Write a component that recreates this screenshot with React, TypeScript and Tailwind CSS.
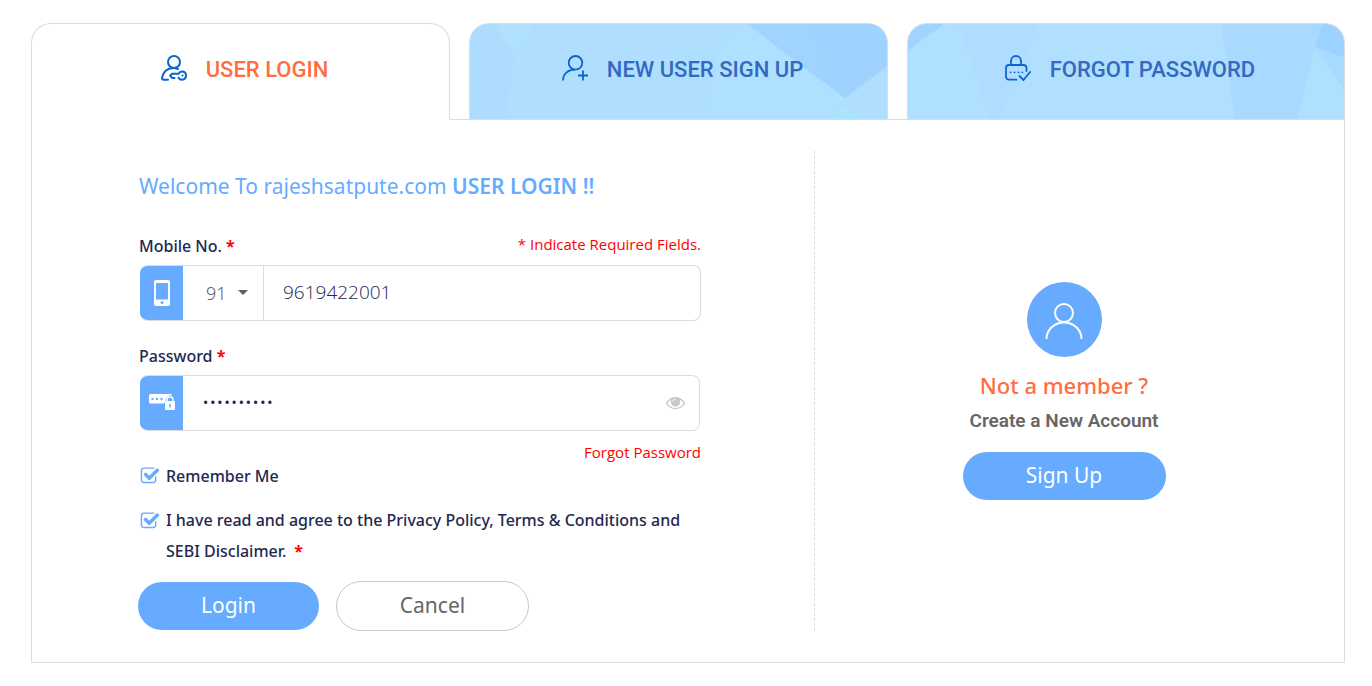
import { useState } from "react";
import type { ReactNode } from "react";

const bodyFont = "font-['Noto_Sans','Open_Sans',sans-serif]";
const noteFont = "font-['Open_Sans','Noto_Sans',sans-serif]";
const titleFont = "font-['Roboto','Noto_Sans',sans-serif]";

function UserKeyIcon() {
  return (
    <svg className="mb-1" width="26" height="26" viewBox="0 0 26 26" fill="none" stroke="#0a66cc" strokeWidth="2" strokeLinecap="round">
      <circle cx="13" cy="7" r="6" />
      <path d="M7 24.700H2.600C1.300 24.700.8 24 1 22.800 1.800 17.200 6.300 13 12 13c2 0 3.600.4 5 1.100" />
      <path d="M13.500 22.900h-2.300l-2-2.100 1.800-2h6.500c.9-1.600 1.900-2.300 3.400-2.300 2.500 0 4.100 1.600 4.100 4.100s-1.600 4.100-4.100 4.100c-1.500 0-2.500-.6-3.400-1.800" />
      <path d="M21.500 20.600h.1" />
    </svg>
  );
}

function UserPlusIcon() {
  return (
    <svg className="mb-1" width="26" height="26" viewBox="0 0 26 26" fill="none" stroke="#0a66cc" strokeWidth="1.800">
      <circle cx="13.500" cy="7.800" r="6.800" />
      <path d="M1 25.500C1 19 6 14.600 12.500 14.600M21 15.500v10M16 20.500h10" />
    </svg>
  );
}

function LockCheckIcon() {
  return (
    <svg className="mb-1" width="26" height="26" viewBox="0 0 26 26" fill="none" stroke="#0a66cc" strokeWidth="1.800" strokeLinecap="round" strokeLinejoin="round">
      <path d="M6 10V6a5 5 0 0 1 10 0v4" />
      <path d="M11.500 24.700H4a3 3 0 0 1-3-3V13a3 3 0 0 1 3-3h14.500a3 3 0 0 1 3 3v3" />
      <path d="M14.500 21l4 4 6.600-8" />
      <path d="M5.500 17.300h.1M9.500 17.300h.1M13.500 17.300h.1M17.300 17.300h.1" />
    </svg>
  );
}

function SignUpBackdrop() {
  return (
    <svg className="absolute inset-0 -z-10 size-full" viewBox="0 0 418 96" preserveAspectRatio="none">
      <rect width="418" height="96" fill="#b0deff" />
      <path d="M0 0h25l20 35L35 96H0z" fill="#aedcff" />
      <path d="M25 0h40L45 28z" fill="#b0e1ff" />
      <path d="M250 20L278 0l98 75-18 21H235z" fill="#b0e0ff" />
      <path d="M278 0h140v43l-42 32z" fill="#9fd2ff" />
      <path d="M278 0h65l15 61z" fill="#a1d3ff" />
      <path d="M361 96l15-14 16 14z" fill="#a9e6fc" />
    </svg>
  );
}

function ForgotBackdrop() {
  return (
    <svg className="absolute inset-0 -z-10 size-full" viewBox="0 0 437 96" preserveAspectRatio="none">
      <rect width="437" height="96" fill="#b0dfff" />
      <path d="M0 27L36 0h15l31 96H0z" fill="#afe0ff" />
      <path d="M0 0h36L0 27z" fill="#a1d3ff" />
      <path d="M51 0h80L90 96h-8z" fill="#b0ddff" />
      <path d="M314 0h101l-7 23-17 73h-63z" fill="#a9d9ff" />
      <path d="M415 0h22v34l-29-11z" fill="#9dd1ff" />
      <path d="M408 23l29 11v33z" fill="#a8dbff" />
      <path d="M408 23l29 44v29h-46z" fill="#afe1ff" />
    </svg>
  );
}

function PhoneIcon() {
  return (
    <svg width="16" height="26" viewBox="0 0 16 26">
      <path fillRule="evenodd" fill="#fff" d="M2 0h12a2 2 0 0 1 2 2v22a2 2 0 0 1-2 2H2a2 2 0 0 1-2-2V2a2 2 0 0 1 2-2zM2 3v16.500h12V3zM8 21a1.500 1.500 0 1 0 0 3 1.500 1.500 0 0 0 0-3z" />
    </svg>
  );
}

function PasswordIcon() {
  return (
    <svg width="26" height="16" viewBox="0 0 26 16">
      <path fill="#fff" d="M1.500 0h20A1.500 1.500 0 0 1 23 1.300c-4 0-6 2-6.500 5.500l-1.500 2.700H1.500A1.500 1.500 0 0 1 0 8V1.500A1.500 1.500 0 0 1 1.500 0z" />
      <g fill="#66abff">
        <circle cx="3.500" cy="5" r="1.200" />
        <circle cx="8" cy="5" r="1.200" />
        <circle cx="12.500" cy="5" r="1.200" />
      </g>
      <path d="M18 8V5.800a3 3 0 0 1 6 0V8" fill="none" stroke="#fff" strokeWidth="1.500" />
      <rect x="16" y="7" width="10" height="9" rx="1" fill="#fff" />
      <path d="M21 10v3.500" stroke="#66abff" strokeWidth="1.500" />
    </svg>
  );
}

function EyeIcon() {
  return (
    <svg width="19" height="19" viewBox="0 0 1792 1792" fill="#c8c8c8">
      <path d="M1664 960q-152-236-381-353 61 104 61 225 0 185-131.500 316.500t-316.500 131.500-316.500-131.500-131.500-316.500q0-121 61-225-229 117-381 353 133 205 333.500 326.500t434.500 121.500 434.500-121.500 333.500-326.500zm-720-384q0-20-14-34t-34-14q-125 0-214.500 89.500t-89.500 214.500q0 20 14 34t34 14 34-14 14-34q0-86 61-147t147-61q20 0 34-14t14-34zm848 384q0 34-20 69-140 230-376.500 368.500t-499.500 138.500-499.500-139-376.500-368q-20-35-20-69t20-69q140-229 376.500-368t499.500-139 499.500 139 376.500 368q20 35 20 69z" />
      <path d="M896 460a400 400 0 1 0 .1 0zm0 68a48 48 0 0 1 0 96 208 208 0 0 0-208 208 48 48 0 0 1-96 0 304 304 0 0 1 304-304z" fillRule="evenodd" />
    </svg>
  );
}

function CheckBox({ id }: { id: string }) {
  return (
    <span className="relative flex size-5 shrink-0">
      <input id={id} type="checkbox" defaultChecked className="peer size-5 appearance-none" />
      <svg viewBox="0 0 1792 1792" fill="#66abff" className="pointer-events-none absolute inset-0 size-5 peer-checked:[&_.tick]:visible">
        <path d="M1472 930v318q0 119-84.500 203.500t-203.500 84.500h-832q-119 0-203.500-84.500t-84.500-203.500v-832q0-119 84.500-203.500t203.500-84.500h832q63 0 117 25 15 7 18 23 3 17-9 29l-49 49q-10 10-23 10-3 0-9-2-23-6-45-6h-832q-66 0-113 47t-47 113v832q0 66 47 113t113 47h832q66 0 113-47t47-113v-254q0-13 9-22l64-64q10-10 23-10 6 0 12 3 20 8 20 29z" />
        <path className="tick invisible" d="M1703 441l-814 814q-24 24-57 24t-57-24l-430-430q-24-24-24-57t24-57l110-110q24-24 57-24t57 24l263 263 647-647q24-24 57-24t57 24l110 110q24 24 24 57t-24 57z" />
      </svg>
    </span>
  );
}

function Tab({ icon, backdrop, children }: { icon: ReactNode; backdrop: ReactNode; children: ReactNode }) {
  return (
    <button
      type="button"
      className={`relative isolate flex h-24 items-center justify-center gap-[19px] overflow-hidden rounded-t-[20px] border border-b-0 border-[#d9dde0] pb-1 pl-2 text-[22px] font-medium text-[#3369c0] ${titleFont}`}
    >
      {backdrop}
      {icon}
      {children}
    </button>
  );
}

const Required = () => <span className="font-bold text-[#ff0000]">*</span>;

export default function App() {
  const [showPassword, setShowPassword] = useState(false);

  return (
    <main className={`bg-white py-[23px] pr-[27px] pl-[31px] text-[#232850] ${bodyFont}`}>
      <div className="grid grid-cols-[419fr_419fr_438fr] gap-[19px]">
        <button
          type="button"
          className={`relative z-10 -mb-px flex h-[97px] items-center justify-center gap-[19px] rounded-t-[20px] border border-b-0 border-[#dcdcdc] bg-white pb-[5px] pl-2 text-[22px] font-medium text-[#ff6e40] ${titleFont}`}
        >
          <UserKeyIcon />
          USER LOGIN
        </button>
        <Tab icon={<UserPlusIcon />} backdrop={<SignUpBackdrop />}>
          NEW USER SIGN UP
        </Tab>
        <Tab icon={<LockCheckIcon />} backdrop={<ForgotBackdrop />}>
          FORGOT PASSWORD
        </Tab>
      </div>

      <div className="grid grid-cols-[752fr_498fr] border border-[#dcdcdc] p-[31px]">
        <form className="border-r border-dashed border-[#dcdcdc] pt-5 pr-[113px] pl-[76px]">
          <h1 className="text-[21px] leading-[30px] text-[#66abff]">
            Welcome To rajeshsatpute.com <b className="font-semibold">USER LOGIN !!</b>
          </h1>

          <div className="mt-[31px] flex h-7 justify-between">
            <label htmlFor="mobile" className="text-base leading-7 font-medium">
              Mobile No. <Required />
            </label>
            <span className={`text-[15px] leading-6 text-[#ff0000] ${noteFont}`}>* Indicate Required Fields.</span>
          </div>
          <div className="mt-[5px] ml-px flex h-14 overflow-hidden rounded-lg border border-l-0 border-[#dcdcdc]">
            <span className="-my-px flex w-[43px] shrink-0 items-center justify-center bg-[#66abff]">
              <PhoneIcon />
            </span>
            <span className="relative flex w-[81px] shrink-0 border-r border-[#dcdcdc]">
              <select aria-label="Country code" className="w-full appearance-none pl-[23px] text-lg font-light text-[#5f5f5f]">
                <option>91</option>
              </select>
              <svg width="10" height="5" viewBox="0 0 10 5" className="pointer-events-none absolute top-6 right-[15px]">
                <path d="M0 0h10L5 5z" fill="#5f5f5f" />
              </svg>
            </span>
            <input
              id="mobile"
              type="text"
              defaultValue="9619422001"
              className={`min-w-0 flex-1 px-[19px] pb-[2px] text-[19px] font-light ${noteFont}`}
            />
          </div>

          <label htmlFor="password" className="mt-[21px] block text-base leading-7 font-medium">
            Password <Required />
          </label>
          <div className="mt-[5px] mr-px ml-px flex h-14 overflow-hidden rounded-lg border border-l-0 border-[#dcdcdc]">
            <span className="-my-px flex w-[43px] shrink-0 items-center justify-center bg-[#66abff] pb-[2px]">
              <PasswordIcon />
            </span>
            <input
              id="password"
              type={showPassword ? "text" : "password"}
              defaultValue="Pass@12345"
              className="min-w-0 flex-1 px-[19px] pb-[2px] text-[19px] font-light"
            />
            <button type="button" aria-label="Show password" onClick={() => setShowPassword(!showPassword)} className="pr-[14px] pb-[2px] pl-2">
              <EyeIcon />
            </button>
          </div>

          <div className={`mt-[11px] flex justify-end text-[15px] leading-5 ${noteFont}`}>
            <a href="#" className="text-[#ff0000]">
              Forgot Password
            </a>
          </div>

          <div className="mt-[2px] ml-px flex h-6 items-center gap-[6px]">
            <CheckBox id="remember" />
            <label htmlFor="remember" className="text-base font-medium">
              Remember Me
            </label>
          </div>
          <div className="mt-[17px] ml-px flex gap-[6px]">
            <span className="pt-[6px]">
              <CheckBox id="agree" />
            </span>
            <label htmlFor="agree" className="text-base leading-[31px] font-medium">
              I have read and agree to the Privacy Policy, Terms &amp; Conditions and{" "}
              <span className="mr-2 whitespace-nowrap">SEBI Disclaimer.</span>
              <Required />
            </label>
          </div>

          <div className="mt-[14px] -ml-px flex items-center gap-[17px]">
            <button type="submit" className="h-12 w-[181px] rounded-full bg-[#66abff] text-[21px] text-white">
              Login
            </button>
            <button type="button" className="h-[50px] w-[193px] rounded-full border border-[#c8c8c8] text-[21px] text-[#666]">
              Cancel
            </button>
          </div>
        </form>

        <aside className="flex flex-col items-center justify-center">
          <span className="flex size-[75px] items-center justify-center rounded-full bg-[#66abff] pt-[2px]">
            <svg width="38" height="38" viewBox="0 0 38 38" fill="none" stroke="#fff" strokeWidth="2">
              <circle cx="19" cy="11" r="9" />
              <path d="M1.500 37a17.500 16.500 0 0 1 35 0" />
            </svg>
          </span>
          <h2 className="mt-[13px] text-[22px] leading-[30px] font-medium text-[#ff6e40]">Not a member ?</h2>
          <h3 className={`mt-[7px] text-[19px] leading-7 font-semibold text-[#666] ${titleFont}`}>Create a New Account</h3>
          <button type="button" className="mt-[17px] h-12 w-[203px] rounded-full bg-[#66abff] text-[21px] text-white">
            Sign Up
          </button>
        </aside>
      </div>
    </main>
  );
}
